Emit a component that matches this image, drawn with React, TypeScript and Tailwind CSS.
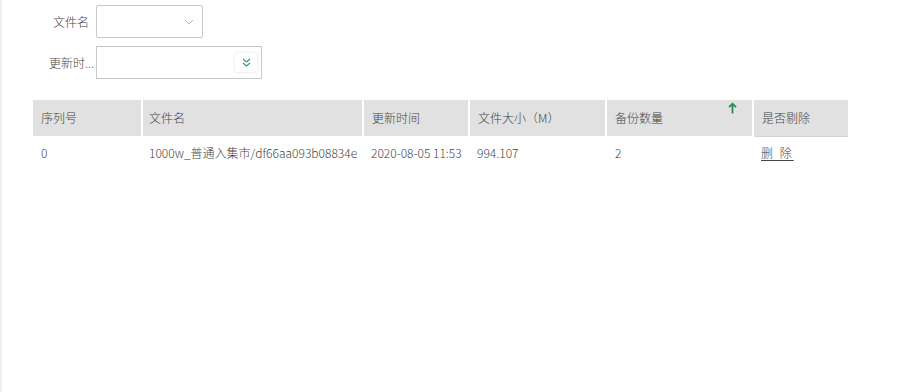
import React from 'react';

const cols = ['序列号', '文件名', '更新时间', '文件大小（M）', '备份数量', '是否剔除'];

const rows = [
    { idx: '0', name: '1000w_普通入集市/df66aa093b08834e', time: '2020-08-05 11:53', size: '994.107', count: '2' },
];

function ChevronDown() {
    return (
        <svg width="10" height="6" viewBox="0 0 10 6" fill="none">
            <path d="M1 1l4 4 4-4" stroke="#b8b8b8" strokeWidth="1" />
        </svg>
    );
}

function DoubleChevron() {
    return (
        <svg width="9" height="9" viewBox="0 0 9 9" fill="none">
            <path d="M1 1l3.5 3 3.5-3M1 5l3.5 3 3.5-3" stroke="#3a9a62" strokeWidth="1.2" />
        </svg>
    );
}

function UpArrow() {
    return (
        <svg width="9" height="12" viewBox="0 0 9 12" fill="none">
            <path d="M4.5 11.5V1.8M1 5.2l3.5-3.5 3.5 3.5" stroke="#2e8b57" strokeWidth="1.8" />
        </svg>
    );
}

export default function App() {
    return (
        <div
            className="w-[910px] h-[392px] bg-white border-l-2 border-[#e8eff6] text-[12px] text-[#444] font-light"
            style={{ fontFamily: '"Noto Sans CJK SC", "Noto Sans", sans-serif' }}
        >
            {/* search form */}
            <div className="pt-[5px] flex flex-col gap-[8px]">
                <div className="flex items-center">
                    <div className="w-[94px] text-right pr-[7px]">文件名</div>
                    <div className="w-[107px] h-[33px] border border-[#c8c8c8] rounded-[2px] flex items-center justify-end pr-[8px]">
                        <ChevronDown />
                    </div>
                </div>
                <div className="flex items-center">
                    <div className="w-[94px] text-right pr-[2px]">更新时...</div>
                    <div className="w-[166px] h-[33px] border border-[#c8c8c8] flex items-center justify-end pr-[4px]">
                        <div className="w-[22px] h-[19px] rounded-[3px] bg-white shadow-[0_0_3px_rgba(0,0,0,0.15)] flex items-center justify-center">
                            <DoubleChevron />
                        </div>
                    </div>
                </div>
            </div>

            {/* table */}
            <div className="mt-[21px] ml-[31px] grid grid-cols-[108px_219px_104px_135px_145px_94px] gap-x-[2px]">
                {cols.map((c, i) => (
                    <div
                        key={c}
                        className={`relative bg-[#e1e1e1] flex items-center ${i === 1 ? 'pl-[6px]' : 'pl-[8px]'} ${i === 5 ? 'border-b border-[#d4d4d4] h-[37px]' : 'h-[36px]'}`}
                    >
                        {c}
                        {i === 4 && (
                            <span className="absolute right-[15px] top-[2px]">
                                <UpArrow />
                            </span>
                        )}
                    </div>
                ))}
                {rows.map(r => (
                    <React.Fragment key={r.idx}>
                        <div className="h-[34px] pt-[7px] pl-[8px]">{r.idx}</div>
                        <div className="h-[34px] pt-[7px] pl-[6px] whitespace-nowrap">{r.name}</div>
                        <div className="h-[34px] pt-[7px] pl-[7px] whitespace-nowrap">{r.time}</div>
                        <div className="h-[34px] pt-[7px] pl-[7px]">{r.size}</div>
                        <div className="h-[34px] pt-[7px] pl-[8px]">{r.count}</div>
                        <div className="h-[34px] pt-[7px] pl-[7px]">
                            <span className="underline underline-offset-2 tracking-[2px]">删&nbsp;除</span>
                        </div>
                    </React.Fragment>
                ))}
            </div>
        </div>
    );
}
